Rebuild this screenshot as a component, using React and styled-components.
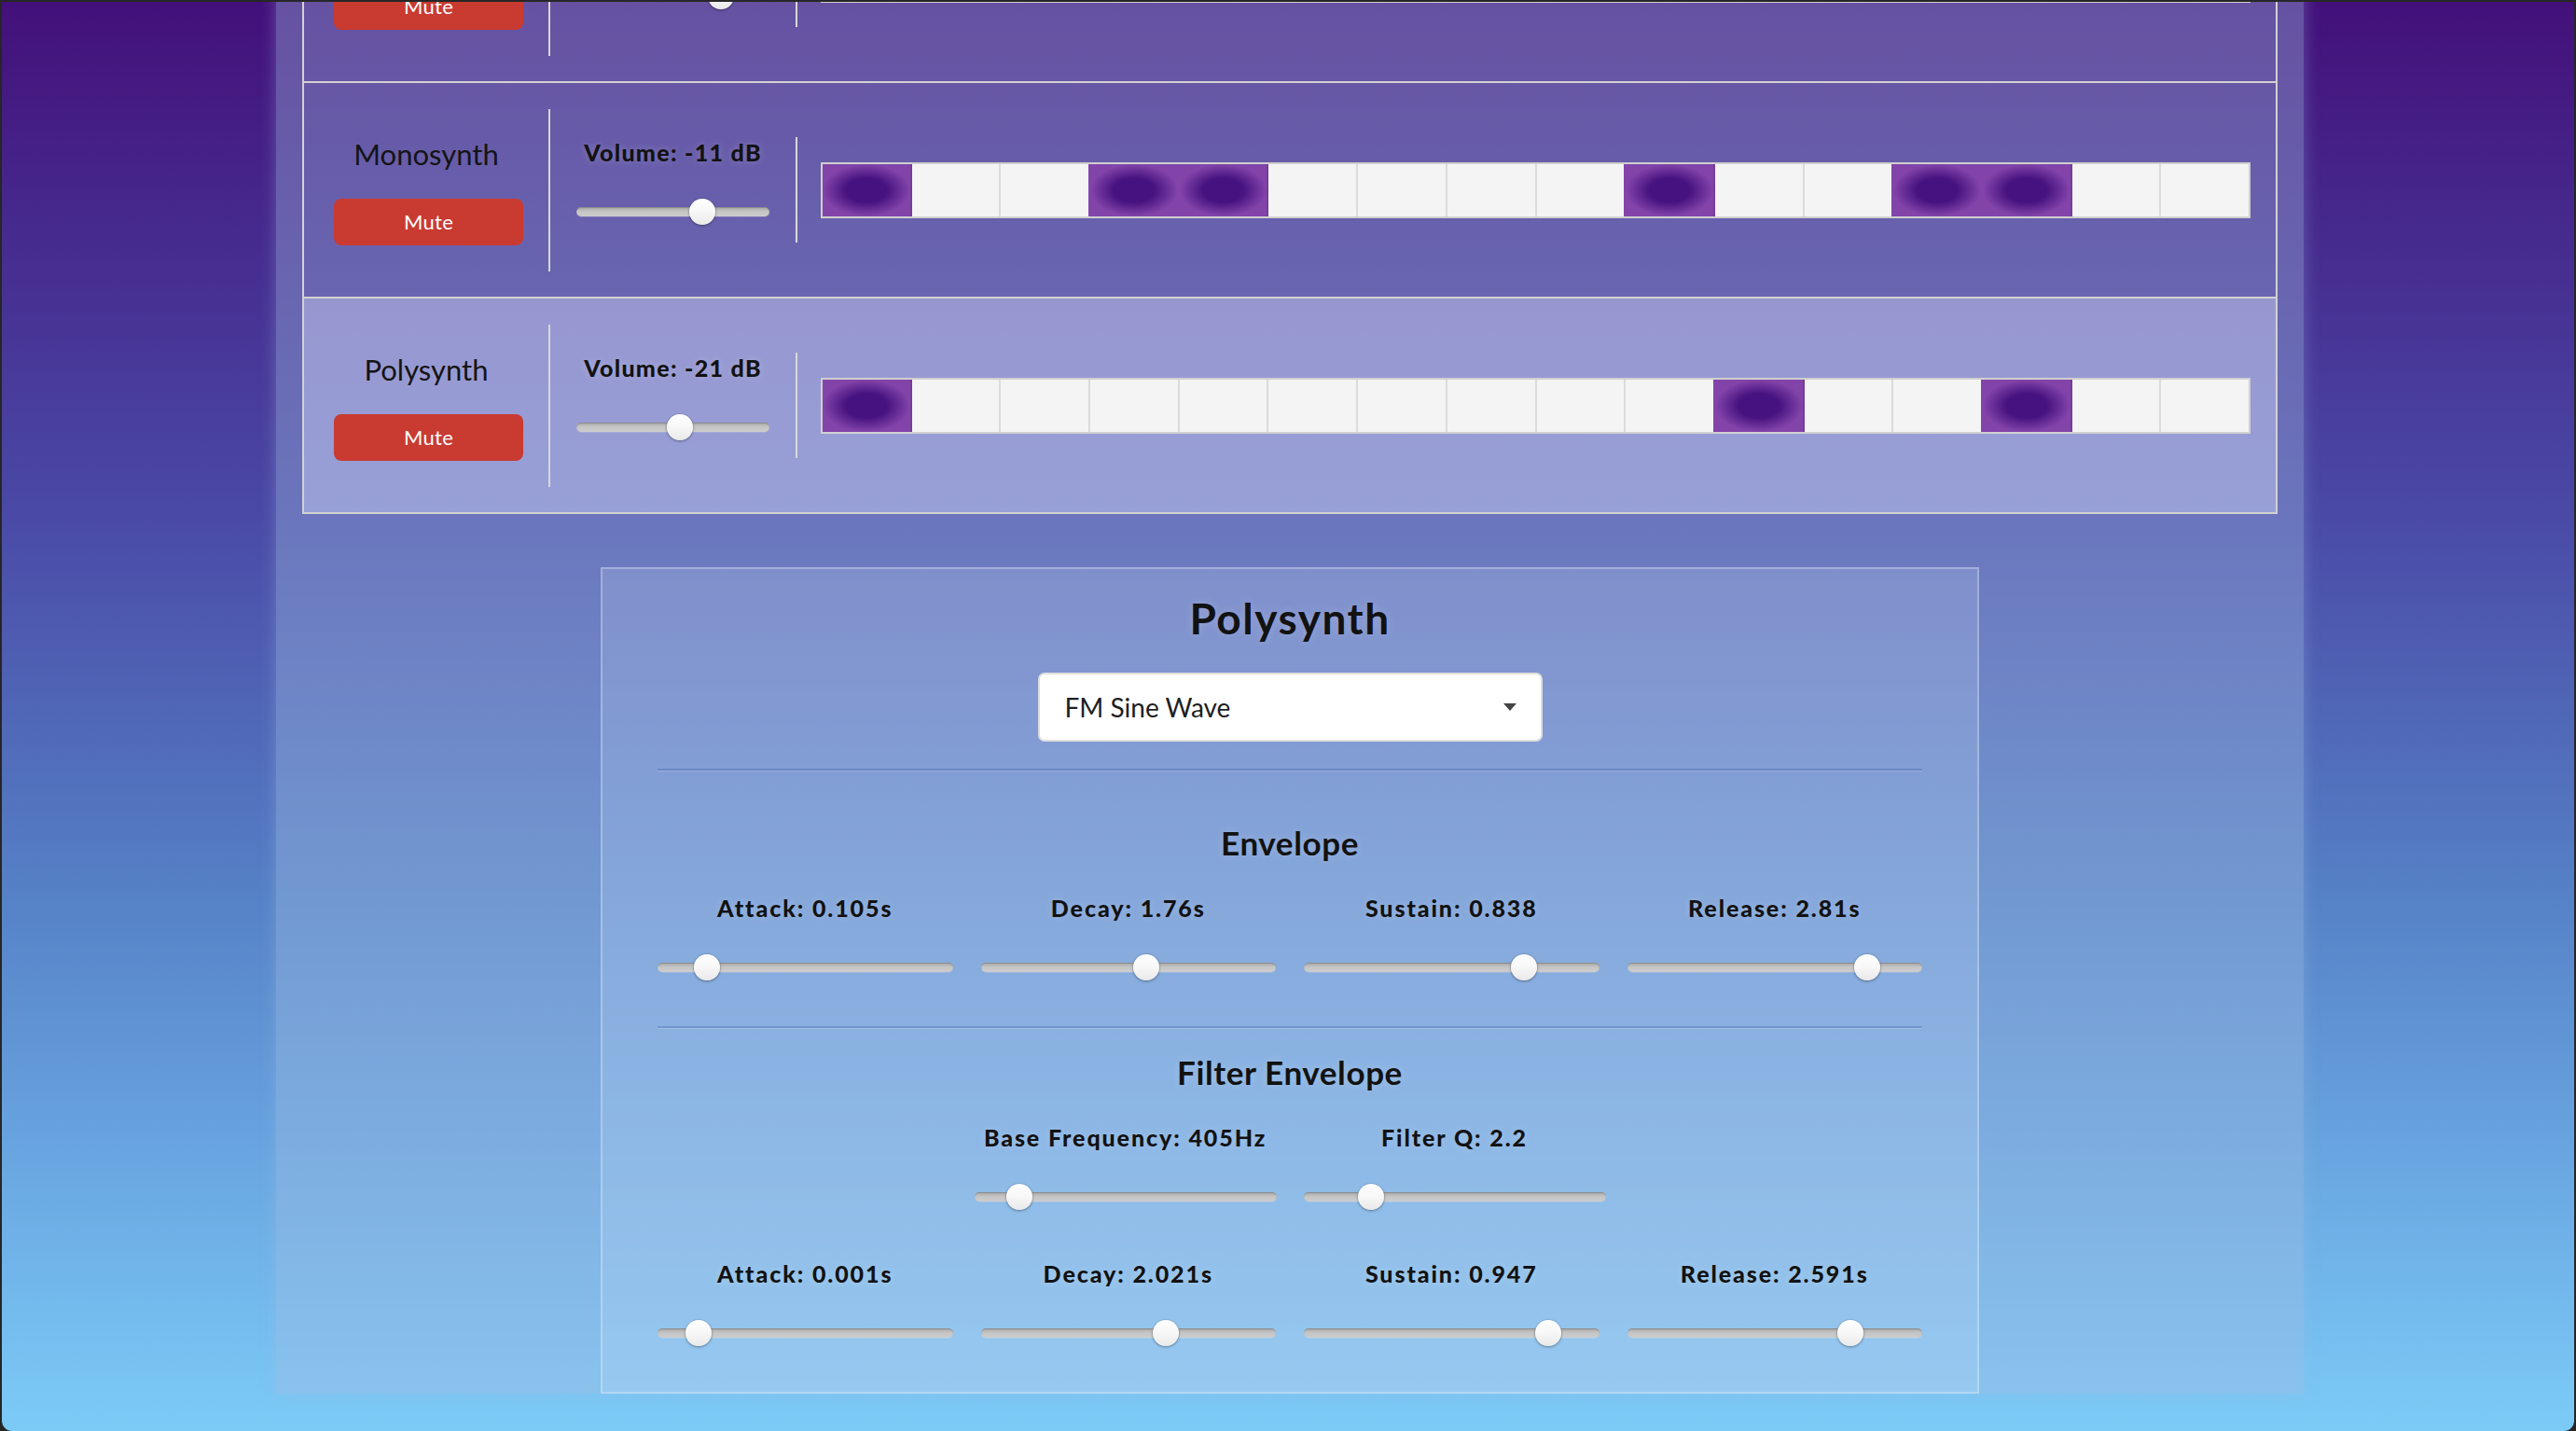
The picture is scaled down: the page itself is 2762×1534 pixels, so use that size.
import React from 'react';
import styled, { createGlobalStyle } from 'styled-components';

const GlobalStyle = createGlobalStyle`
  html, body { margin: 0; padding: 0; background: #262626; }
  body { font-family: Lato, "Noto Sans", sans-serif; color: #141414; }
  * { box-sizing: border-box; }
`;

const Window = styled.div`
  margin: 2px 2px 0 2px;
  height: 1532px;
  border-radius: 0 0 11px 11px;
  overflow: hidden;
  display: flex;
  flex-direction: column;
  justify-content: flex-end;
  background: linear-gradient(180deg, #43107a 0%, #4a4aa6 36%, #5580c6 62%, #6aa8e2 82%, #7ccbf7 100%);
`;

const Page = styled.div`
  flex-shrink: 0;
  padding: 0 0 40px 4px;
`;

const Container = styled.main`
  width: 2174px;
  margin: 0 auto;
  padding: 0 28px;
  background: rgba(160, 188, 226, 0.38);
  box-shadow: 0 0 16px rgba(160, 188, 226, 0.35);
`;

/* ---------- tracks ---------- */

const TrackList = styled.section`
  border: 2px solid #d2d2d2;
`;

const TrackRow = styled.div`
  box-sizing: content-box;
  display: flex;
  align-items: center;
  height: 229px;
  padding-right: 27px;
  background: ${(p) => (p.$selected ? 'rgba(220, 225, 255, 0.4)' : 'transparent')};
  & + & {
    border-top: 2px solid #d2d2d2;
  }
`;

const NameCol = styled.div`
  width: 264px;
  flex-shrink: 0;
  border-right: 2px solid #d8d8d8;
  padding: 30px 0 28px 0;
  display: flex;
  flex-direction: column;
  align-items: center;
  gap: 30px;
`;

const TrackName = styled.div`
  font-size: 31px;
  line-height: 36px;
  color: #141414;
`;

const MuteButton = styled.button`
  width: 203px;
  height: 50px;
  margin-left: 5px;
  border: none;
  border-radius: 8px;
  background: #c93a31;
  color: #fff;
  font-family: Lato, "Noto Sans", sans-serif;
  font-size: 22px;
  letter-spacing: 0.3px;
  padding: 0;
`;

const VolumeCol = styled.div`
  width: 265px;
  flex-shrink: 0;
  border-right: 2px solid #d8d8d8;
  padding: 1px 28px 19px;
  display: flex;
  flex-direction: column;
  gap: 35px;
`;

const Label = styled.div`
  font-weight: 900;
  font-size: 25px;
  line-height: 30px;
  letter-spacing: ${(p) => p.$spacing ?? 1.9}px;
  text-align: center;
  color: #121212;
  white-space: nowrap;
  text-shadow: 0 0 8px rgba(255, 255, 255, 0.22);
`;

const StepGrid = styled.div`
  flex: 1;
  margin-left: 25px;
  height: 60px;
  border: 2px solid #d0d0d0;
  display: flex;
  background: #f4f4f4;
`;

const Step = styled.div`
  flex: 1;
  border-right: 2px solid rgba(0, 0, 0, 0.1);
  background: ${(p) =>
    p.$on ? 'radial-gradient(closest-side, #46127f 46%, #8344aa 100%)' : '#f4f4f4'};
  box-shadow: ${(p) => (p.$on ? '-2px 0 0 #8344aa' : 'none')};
  &:first-child {
    box-shadow: none;
  }
  &:last-child {
    border-right: none;
  }
`;

/* ---------- slider ---------- */

const Range = styled.input.attrs({ type: 'range', min: 0, max: 1000, step: 1 })`
  -webkit-appearance: none;
  appearance: none;
  display: block;
  width: 100%;
  height: 28px;
  margin: 0;
  padding: 0;
  background: transparent;
  &::-webkit-slider-runnable-track {
    height: 10px;
    border-radius: 5px;
    background: linear-gradient(180deg, #a6a6a6 0%, #c4c4c4 45%, #cdcdcd 100%);
    box-shadow: inset 0 1px 1px rgba(0, 0, 0, 0.18), 0 1px 0 rgba(255, 255, 255, 0.15);
  }
  &::-webkit-slider-thumb {
    -webkit-appearance: none;
    appearance: none;
    width: 28px;
    height: 28px;
    margin-top: -9px;
    border-radius: 50%;
    background: linear-gradient(180deg, #ffffff 0%, #f7f7f7 50%, #e9e9e9 100%);
    box-shadow: 0 1px 3px rgba(0, 0, 0, 0.35), 0 0 0 1px rgba(0, 0, 0, 0.06);
  }
`;

/* ---------- editor ---------- */

const Editor = styled.section`
  width: 1478px;
  margin: 57px auto 0;
  border: 2px solid rgba(255, 255, 255, 0.28);
  background: rgba(210, 230, 255, 0.2);
  padding: 25px 59px 49px;
  display: flex;
  flex-direction: column;
  align-items: center;
`;

const EditorTitle = styled.h2`
  margin: 0;
  font-size: 46px;
  line-height: 56px;
  font-weight: 700;
  letter-spacing: 1.5px;
  color: #121212;
  text-shadow: 0 0 10px rgba(255, 255, 255, 0.22);
`;

const SelectBox = styled.div`
  margin-top: 30px;
  width: 541px;
  height: 74px;
  background: #fff;
  border: 2px solid #dedede;
  border-radius: 7px;
  display: flex;
  align-items: center;
  justify-content: space-between;
  padding: 0 26px 0 27px;
  font-size: 28px;
  color: #1e1e1e;
`;

const Caret = styled.span`
  width: 0;
  height: 0;
  border-left: 7px solid transparent;
  border-right: 7px solid transparent;
  border-top: 8px solid #444;
`;

const Divider = styled.hr`
  align-self: stretch;
  margin: ${(p) => p.$top}px 0 0;
  height: 0;
  border: 0;
  border-top: 2px solid rgba(45, 75, 145, 0.26);
  box-shadow: 0 1px 0 rgba(255, 255, 255, 0.18);
`;

const SectionTitle = styled.h3`
  margin: ${(p) => p.$top}px 0 0;
  font-size: 35px;
  line-height: 42px;
  font-weight: 700;
  letter-spacing: 0.6px;
  color: #121212;
  text-shadow: 0 0 10px rgba(255, 255, 255, 0.22);
`;

const ControlGrid = styled.div`
  align-self: stretch;
  margin-top: ${(p) => p.$top}px;
  display: grid;
  grid-template-columns: ${(p) => (p.$narrow ? 'repeat(2, 324px)' : 'repeat(4, 1fr)')};
  justify-content: center;
  column-gap: ${(p) => (p.$narrow ? 29 : 30)}px;
`;

const Control = styled.div`
  display: flex;
  flex-direction: column;
  gap: 35px;
`;

/* ---------- data ---------- */

const tracks = [
  { name: 'Drums', volume: 'Volume: -6 dB', vol: 0.79, steps: [0, 4, 8, 12] },
  { name: 'Monosynth', volume: 'Volume: -11 dB', vol: 0.674, steps: [0, 3, 4, 9, 12, 13] },
  { name: 'Polysynth', volume: 'Volume: -21 dB', vol: 0.542, steps: [0, 10, 13], selected: true },
];

const envelope = [
  { label: 'Attack: 0.105s', v: 0.135 },
  { label: 'Decay: 1.76s', v: 0.567 },
  { label: 'Sustain: 0.838', v: 0.77 },
  { label: 'Release: 2.81s', v: 0.844 },
];

const filterTop = [
  { label: 'Base Frequency: 405Hz', v: 0.118 },
  { label: 'Filter Q: 2.2', v: 0.196 },
];

const filterEnv = [
  { label: 'Attack: 0.001s', v: 0.104 },
  { label: 'Decay: 2.021s', v: 0.64 },
  { label: 'Sustain: 0.947', v: 0.86 },
  { label: 'Release: 2.591s', v: 0.78 },
];

function SliderControl({ label, v }) {
  return (
    <Control>
      <Label>{label}</Label>
      <Range defaultValue={Math.round(v * 1000)} aria-label={label} />
    </Control>
  );
}

function Track({ track }) {
  const on = new Set(track.steps);
  return (
    <TrackRow $selected={track.selected}>
      <NameCol>
        <TrackName>{track.name}</TrackName>
        <MuteButton>Mute</MuteButton>
      </NameCol>
      <VolumeCol>
        <Label $spacing={1.3}>{track.volume}</Label>
        <Range defaultValue={Math.round(track.vol * 1000)} aria-label={track.volume} />
      </VolumeCol>
      <StepGrid>
        {Array.from({ length: 16 }, (_, i) => (
          <Step key={i} $on={on.has(i)} />
        ))}
      </StepGrid>
    </TrackRow>
  );
}

export default function App() {
  return (
    <>
      <GlobalStyle />
      <Window>
        <Page>
          <Container>
            <TrackList>
              {tracks.map((t) => (
                <Track key={t.name} track={t} />
              ))}
            </TrackList>
            <Editor>
              <EditorTitle>Polysynth</EditorTitle>
              <SelectBox>
                <span>FM Sine Wave</span>
                <Caret />
              </SelectBox>
              <Divider $top={29} />
              <SectionTitle $top={56}>Envelope</SectionTitle>
              <ControlGrid $top={34}>
                {envelope.map((c) => (
                  <SliderControl key={c.label} {...c} />
                ))}
              </ControlGrid>
              <Divider $top={49} />
              <SectionTitle $top={26}>Filter Envelope</SectionTitle>
              <ControlGrid $top={34} $narrow>
                {filterTop.map((c) => (
                  <SliderControl key={c.label} {...c} />
                ))}
              </ControlGrid>
              <ControlGrid $top={53}>
                {filterEnv.map((c) => (
                  <SliderControl key={c.label} {...c} />
                ))}
              </ControlGrid>
            </Editor>
          </Container>
        </Page>
      </Window>
    </>
  );
}
